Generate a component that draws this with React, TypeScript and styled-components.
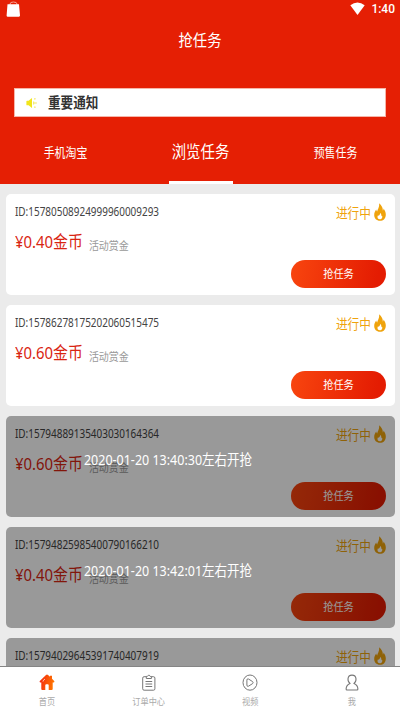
import React from 'react';
import styled, { createGlobalStyle } from 'styled-components';

const GlobalStyle = createGlobalStyle`
  * { box-sizing: border-box; }
  body { margin: 0; background: #ebebeb; font-family: "Noto Sans", "Noto Sans CJK SC", sans-serif; }
`;

const Screen = styled.div`
  width: 400px;
  height: 710px;
  display: flex;
  flex-direction: column;
  overflow: hidden;
  background: #ebebeb;
`;

const Label = styled.span<{ $size: number; $color?: string; $weight?: number; $stretch?: number }>`
  display: block;
  white-space: nowrap;
  line-height: 20px;
  font-size: ${p => p.$size}px;
  font-weight: ${p => p.$weight ?? 400};
  color: ${p => p.$color ?? '#fff'};
  transform: scaleY(${p => p.$stretch ?? 1.15});
`;

const Clock = styled(Label)`
  font-family: Roboto, "Noto Sans", sans-serif;
`;

const Header = styled.header`
  height: 184px;
  flex: none;
  display: flex;
  flex-direction: column;
  background: #e51f04;
`;

const StatusBar = styled.div`
  height: 18px;
  display: flex;
  align-items: center;
  padding: 0 5px 0 6px;
  svg { display: block; }
`;

const StatusRight = styled.div`
  margin-left: auto;
  display: flex;
  align-items: center;
  gap: 6px;
`;

const TitleBar = styled.div`
  height: 70px;
  padding-top: 15px;
  display: flex;
  justify-content: center;
`;

const Notice = styled.div`
  height: 29px;
  margin: 0 14px;
  display: flex;
  align-items: center;
  gap: 11px;
  padding: 1px 0 0 11px;
  border: 1px solid #f6b5a9;
  background: #fff;
`;

const Tabs = styled.nav`
  flex: 1;
  display: grid;
  grid-template-columns: 131px 139px 131px;
`;

const Tab = styled.div<{ $active?: boolean }>`
  display: flex;
  flex-direction: column;
  align-items: center;
  justify-content: space-between;
  padding-top: 25px;
`;

const Underline = styled.i`
  width: 64px;
  height: 3px;
  background: #fff;
`;

const List = styled.main`
  flex: 1;
  min-height: 0;
  overflow: hidden;
  padding: 10px 5px 0 6px;
  display: flex;
  flex-direction: column;
  gap: 10px;
`;

const Card = styled.article`
  position: relative;
  flex: none;
  height: 101px;
  padding: 7px 9px 7px;
  display: flex;
  flex-direction: column;
  border-radius: 5px;
  overflow: hidden;
  background: #fff;
`;

const CardTop = styled.div`
  height: 24px;
  display: flex;
  justify-content: space-between;
  align-items: flex-start;
`;

const Status = styled.div`
  display: flex;
  align-items: center;
  gap: 3px;
  padding-top: 1px;
`;

const Reward = styled.div`
  height: 35px;
  display: flex;
  align-items: flex-start;
  gap: 6px;
  padding-top: 6px;
`;

const Hint = styled.div`
  padding-top: 4px;
`;

const Grab = styled.button`
  align-self: flex-end;
  width: 95px;
  height: 28px;
  padding: 0 0 2px;
  border: 0;
  border-radius: 14px;
  display: flex;
  align-items: center;
  justify-content: center;
  font-family: inherit;
  background: linear-gradient(100deg, #f7430e 5%, #e41c02 90%);
`;

const Shade = styled.div`
  position: absolute;
  inset: 0;
  padding: 38px 65px 0 0;
  display: flex;
  justify-content: center;
  background: rgba(0, 0, 0, 0.4);
`;

const NavBar = styled.footer`
  height: 44px;
  flex: none;
  display: flex;
  justify-content: space-between;
  padding: 0 18px 0 17px;
  border-top: 1px solid #858585;
  background: #fff;
`;

const NavItem = styled.div`
  width: 60px;
  display: flex;
  flex-direction: column;
  align-items: center;
  padding-top: 7px;
  svg { display: block; flex: none; }
  span { margin-top: 1px; }
`;

const Bag = () => (
  <svg width="15" height="16" viewBox="0 0 15 16">
    <path d="M4 4V3Q4 1 7.4 1Q11 1 11 3V4" fill="none" stroke="#f7a497" strokeWidth="1" />
    <path d="M1.5 3.2H13L14 14.6Q14 15.7 13 15.7H1.5Q.5 15.7.6 14.6Z" fill="#fff" />
  </svg>
);

const Wifi = () => (
  <svg width="15" height="14" viewBox="0 0 15 14">
    <path d="M.3 3.3Q7.5-2.2 14.7 3.3L7.5 13Z" fill="#fff" />
  </svg>
);

const Speaker = () => (
  <svg width="11" height="12" viewBox="0 0 11 12">
    <path d="M.4 4.3Q.4 3.8 1 3.8H2.6L6 1V11L2.6 8.2H1Q.4 8.2.4 7.7Z" fill="#f1e51c" />
    <path d="M7.5 4.6Q8.7 6 7.5 7.4M8.4 2.3L9.4 1.5M9.2 6H10.7M8.4 9.7L9.4 10.5" stroke="#eee13a" strokeWidth="1.1" fill="none" />
  </svg>
);

const Flame = () => (
  <svg width="12" height="18" viewBox="0 0 12 18">
    <path
      fillRule="evenodd"
      fill="#efa30c"
      d="M5.1.2C6.2 1.2 9.2 4 8.8 7.4C9.3 7 9.6 6.2 9.5 5.4C11 7.2 11.8 9.3 11.8 11.7C11.8 15.4 9.4 17.8 6 17.8C2.5 17.8.2 15.3.2 12C.2 9.8 1.1 8.3 2.2 6.6C2.5 7.7 2.7 8.2 3.3 8.6C3.1 6.8 5.7 4.6 5.1.2ZM6.2 9.7C6.5 11.3 5.2 11.7 4.8 13.1C4.4 12.7 4.2 12.3 4.2 11.9C3.2 13.2 3.1 15.9 5.8 16.2C8.4 16.2 8.7 13.8 7.9 12.2C7.7 12.8 7.6 13 7.2 13.2C7.5 11.8 7.2 10.4 6.2 9.7Z"
    />
  </svg>
);

const HomeIcon = () => (
  <svg width="16" height="17" viewBox="0 0 16 17">
    <defs>
      <linearGradient id="home" x1="0" x2="1" y1="0.3" y2="0.5">
        <stop offset="0" stopColor="#f32810" />
        <stop offset="1" stopColor="#ff7900" />
      </linearGradient>
    </defs>
    <path fill="url(#home)" d="M7 1Q8 .2 9 1L11 2.8V1.8H13V4.7L15.2 7Q16 8.2 14.6 8.5H13.7V15Q13.7 16 12.7 16H9.7V11.2Q9.7 10.3 8.7 10.3H7.3Q6.3 10.3 6.3 11.2V16H3.3Q2.3 16 2.3 15V8.5H1.4Q0 8.2.8 7Z" />
    <path d="M4 7.6V6.8L6 5" fill="none" stroke="#ffc3b4" strokeWidth="1" />
  </svg>
);

const OrderIcon = () => (
  <svg width="16" height="17" viewBox="0 0 16 17" fill="none" stroke="#777" strokeWidth="1">
    <path d="M5.3 2.7H3.1Q1.7 2.7 1.7 4.1V14.8Q1.7 16.2 3.1 16.2H12.5Q13.9 16.2 13.9 14.8V4.1Q13.9 2.7 12.5 2.7H10.4" />
    <path d="M5.3 4.5V2.4H6.4Q7.8-.6 9.2 2.4H10.4V4.5ZM4.5 7.5H11.2M4.5 10H11.2M4.5 12.5H11.2" />
  </svg>
);

const VideoIcon = () => (
  <svg width="16" height="17" viewBox="0 0 16 17" fill="none" stroke="#777" strokeWidth="1">
    <ellipse cx="8" cy="8.6" rx="7" ry="7.6" />
    <path d="M4.9 6.1Q4.9 4.4 6.5 5L10.6 7.6Q11.6 8.6 10.6 9.6L6.5 12.2Q4.9 12.8 4.9 11.1Z" />
  </svg>
);

const UserIcon = () => (
  <svg width="14" height="17" viewBox="0 0 14 17" fill="none" stroke="#777" strokeWidth="1.1" strokeLinejoin="round">
    <path d="M5.1 9.5C3.4 8.5 2.9 7 3 4.9C3.2 2.4 4.8 1.1 7 1.1C9.2 1.1 10.8 2.4 11 4.9C11.1 7 10.6 8.5 8.9 9.5C11.4 10.5 12.8 12.4 12.9 15Q12.9 16 12 16H2Q1.1 16 1.1 15C1.2 12.4 2.6 10.5 5.1 9.5Z" />
  </svg>
);

type Task = { id: string; price?: string; locked?: boolean; opens?: string };

const tasks: Task[] = [
  { id: '15780508924999960009293', price: '0.40' },
  { id: '15786278175202060515475', price: '0.60' },
  { id: '15794889135403030164364', price: '0.60', locked: true, opens: '2020-01-20 13:40:30' },
  { id: '15794825985400790166210', price: '0.40', locked: true, opens: '2020-01-20 13:42:01' },
  { id: '15794029645391740407919', locked: true },
];

const TaskCard = ({ task }: { task: Task }) => (
  <Card>
    <CardTop>
      <Label $size={9.95} $color="#444" $stretch={1.2}>ID:{task.id}</Label>
      <Status>
        <Label $size={11.7} $color="#efa30c">进行中</Label>
        <Flame />
      </Status>
    </CardTop>
    {task.price && (
      <>
        <Reward>
          <Label $size={14.9} $color="#d92512">¥{task.price}金币</Label>
          <Hint>
            <Label $size={10} $color="#999">活动赏金</Label>
          </Hint>
        </Reward>
        <Grab>
          <Label $size={10.2}>抢任务</Label>
        </Grab>
      </>
    )}
    {task.locked && (
      <Shade>
        {task.opens && <Label $size={12.5}>{task.opens}左右开抢</Label>}
      </Shade>
    )}
  </Card>
);

export default function App() {
  return (
    <>
      <GlobalStyle />
      <Screen>
        <Header>
          <StatusBar>
            <Bag />
            <StatusRight>
              <Wifi />
              <Clock $size={12} $weight={500} $stretch={1.1}>1:40</Clock>
            </StatusRight>
          </StatusBar>
          <TitleBar>
            <Label $size={14.3}>抢任务</Label>
          </TitleBar>
          <Notice>
            <Speaker />
            <Label $size={12.6} $color="#333" $weight={700}>重要通知</Label>
          </Notice>
          <Tabs>
            <Tab><Label $size={10.9}>手机淘宝</Label></Tab>
            <Tab $active><Label $size={14.4}>浏览任务</Label><Underline /></Tab>
            <Tab><Label $size={10.9}>预售任务</Label></Tab>
          </Tabs>
        </Header>
        <List>
          {tasks.map(task => <TaskCard key={task.id} task={task} />)}
        </List>
        <NavBar>
          <NavItem><HomeIcon /><Label $size={8.2} $color="#aaa">首页</Label></NavItem>
          <NavItem><OrderIcon /><Label $size={8.2} $color="#aaa">订单中心</Label></NavItem>
          <NavItem><VideoIcon /><Label $size={8.2} $color="#aaa">视频</Label></NavItem>
          <NavItem><UserIcon /><Label $size={8.2} $color="#aaa">我</Label></NavItem>
        </NavBar>
      </Screen>
    </>
  );
}
